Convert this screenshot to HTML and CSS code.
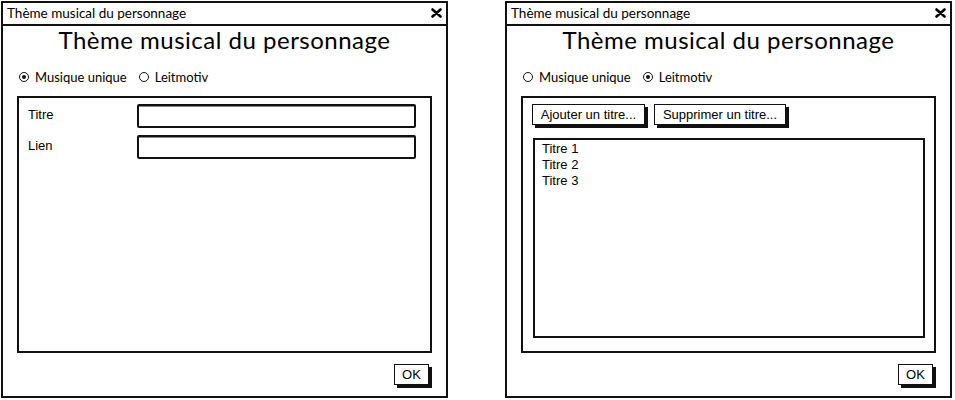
FILE: index.html
```html
<!DOCTYPE html>
<html lang="fr">
<head>
<meta charset="utf-8">
<title>Thème musical du personnage</title>
<link rel="stylesheet" href="styles.css">
</head>
<body>
<div class="stage">
  <section class="window">
    <header class="titlebar">
      <span class="title-text">Thème musical du personnage</span>
      <svg class="close" width="11" height="10" viewBox="0 0 11 10"><path d="M1.5 1.5 L9.5 8.5 M9.5 1.5 L1.5 8.5" stroke="#000" stroke-width="2.6" stroke-linecap="round"/></svg>
    </header>
    <div class="body">
      <h1 class="heading">Thème musical du personnage</h1>
      <div class="radios">
        <span class="radio checked"></span><span class="radio-label">Musique unique</span>
        <span class="radio"></span><span class="radio-label">Leitmotiv</span>
      </div>
      <div class="panel">
        <div class="field-row">
          <span class="field-label">Titre</span>
          <span class="input"></span>
        </div>
        <div class="field-row">
          <span class="field-label">Lien</span>
          <span class="input"></span>
        </div>
      </div>
      <div class="footer"><span class="btn ok">OK</span></div>
    </div>
  </section>

  <section class="window">
    <header class="titlebar">
      <span class="title-text">Thème musical du personnage</span>
      <svg class="close" width="11" height="10" viewBox="0 0 11 10"><path d="M1.5 1.5 L9.5 8.5 M9.5 1.5 L1.5 8.5" stroke="#000" stroke-width="2.6" stroke-linecap="round"/></svg>
    </header>
    <div class="body">
      <h1 class="heading">Thème musical du personnage</h1>
      <div class="radios">
        <span class="radio"></span><span class="radio-label">Musique unique</span>
        <span class="radio checked"></span><span class="radio-label">Leitmotiv</span>
      </div>
      <div class="panel panel-list">
        <div class="btn-row">
          <span class="btn">Ajouter un titre...</span>
          <span class="btn">Supprimer un titre...</span>
        </div>
        <ul class="listbox">
          <li>Titre 1</li>
          <li>Titre 2</li>
          <li>Titre 3</li>
        </ul>
      </div>
      <div class="footer"><span class="btn ok">OK</span></div>
    </div>
  </section>
</div>
</body>
</html>
```

FILE: styles.css
```css
html, body {
  margin: 0;
  padding: 0;
  background: #fff;
}

.stage {
  display: flex;
  gap: 57px;
  padding: 1px 0 0 1px;
  width: 955px;
  height: 400px;
  box-sizing: border-box;
}

.window {
  width: 447px;
  height: 397px;
  box-sizing: border-box;
  border: 2px solid #111;
  display: flex;
  flex-direction: column;
  background: #fff;
}

.titlebar {
  height: 20px;
  border-bottom: 2px solid #111;
  display: flex;
  align-items: center;
  justify-content: space-between;
  padding: 0 4px 1px 4px;
  flex: none;
}

.title-text {
  font-family: Lato, "Open Sans", sans-serif;
  font-size: 13.5px;
  color: #000;
}

.close {
  display: block;
}

.body {
  flex: 1;
  display: flex;
  flex-direction: column;
  padding: 0 14px 0 14px;
}

.heading {
  margin: -1px 0 0 0;
  text-align: center;
  font-family: Lato, "Open Sans", sans-serif;
  font-weight: 400;
  font-size: 24px;
  line-height: 30px;
  color: #000;
  letter-spacing: 0.5px;
}

.radios {
  display: flex;
  align-items: center;
  margin-top: 14px;
  height: 16px;
  padding-left: 2px;
}

.radio {
  width: 8px;
  height: 8px;
  border: 1.5px solid #111;
  border-radius: 50%;
  margin-right: 6px;
  position: relative;
  flex: none;
}

.radio.checked::after {
  content: "";
  position: absolute;
  left: 2px;
  top: 2px;
  width: 4px;
  height: 4px;
  border-radius: 50%;
  background: #111;
}

.radio-label {
  font-family: Lato, "Open Sans", sans-serif;
  font-size: 13px;
  margin-right: 12px;
  color: #000;
}

.panel {
  margin-top: 11px;
  height: 257px;
  box-sizing: border-box;
  border: 2px solid #111;
  padding: 6px 14px 0 9px;
  display: flex;
  flex-direction: column;
  gap: 7px;
}

.field-row {
  display: flex;
  align-items: center;
  height: 24px;
}

.field-label {
  width: 109px;
  font-family: "Liberation Sans", Arial, sans-serif;
  font-size: 13px;
  color: #000;
  margin-top: -4px;
}

.input {
  flex: 1;
  height: 24px;
  box-sizing: border-box;
  border: 2px solid #111;
  border-radius: 2px;
  box-shadow: inset 0 1px 0 #888;
}

.footer {
  display: flex;
  justify-content: flex-end;
  padding-top: 11px;
}

.btn {
  display: inline-flex;
  align-items: center;
  justify-content: center;
  height: 21px;
  box-sizing: border-box;
  border: 1.5px solid #111;
  box-shadow: 3px 3px 0 #111;
  font-family: "Liberation Sans", Arial, sans-serif;
  font-size: 13px;
  color: #000;
  padding: 0 6px;
  background: #fff;
  white-space: nowrap;
}

.ok {
  width: 35px;
  padding: 0;
  margin-right: 3px;
}

.panel-list {
  padding: 6px 9px 0 9px;
  gap: 13px;
}

.btn-row {
  display: flex;
  gap: 9px;
}

.btn-row .btn:first-child {
  width: 113px;
}

.btn-row .btn:last-child {
  width: 132px;
}

.listbox {
  list-style: none;
  margin: 0 0 0 1px;
  padding: 1px 7px;
  height: 200px;
  box-sizing: border-box;
  border: 2px solid #111;
  font-family: "Liberation Sans", Arial, sans-serif;
  font-size: 13px;
  line-height: 16px;
  color: #000;
}
```
